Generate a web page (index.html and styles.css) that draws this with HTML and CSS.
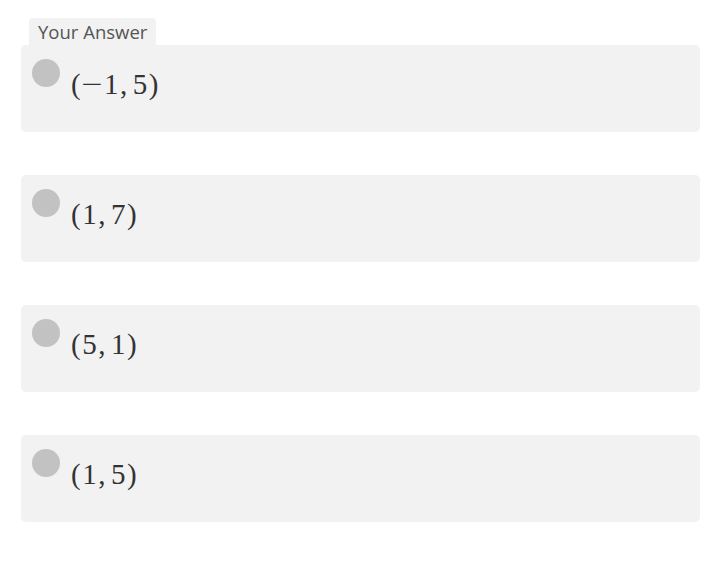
FILE: index.html
```html
<!DOCTYPE html>
<html>
<head>
<meta charset="utf-8">
<link rel="stylesheet" href="styles.css">
</head>
<body>
<div class="question">
  <div class="tab">Your Answer</div>
  <div class="options">
    <div class="option"><span class="radio"></span><span class="math">(<span class="minus">−</span>1,<span class="thin"></span>5)</span></div>
    <div class="option"><span class="radio"></span><span class="math">(1,<span class="thin"></span>7)</span></div>
    <div class="option"><span class="radio"></span><span class="math">(5,<span class="thin"></span>1)</span></div>
    <div class="option"><span class="radio"></span><span class="math">(1,<span class="thin"></span>5)</span></div>
  </div>
</div>
</body>
</html>
```

FILE: styles.css
```css
html, body {
  margin: 0;
  padding: 0;
  background: #ffffff;
}
.question {
  padding: 18px 13px 0 21px;
  width: 679px;
}
.tab {
  display: inline-block;
  margin-left: 8px;
  height: 27px;
  box-sizing: border-box;
  padding: 3px 9px 0 9px;
  background: #f2f2f2;
  border-radius: 4px 4px 0 0;
  font-family: "Open Sans", sans-serif;
  font-size: 18.5px;
  line-height: 22px;
  color: #555555;
}
.options {
  display: flex;
  flex-direction: column;
  gap: 43px;
}
.option {
  height: 87px;
  box-sizing: border-box;
  background: #f2f2f2;
  border-radius: 5px;
  display: flex;
  align-items: flex-start;
  padding: 14px 0 0 11px;
}
.radio {
  width: 28px;
  height: 28px;
  border-radius: 50%;
  background: #c2c2c2;
  flex: none;
}
.math {
  margin-left: 11px;
  margin-top: 8px;
  font-family: "Liberation Serif", "Times New Roman", serif;
  font-size: 29px;
  line-height: 34px;
  color: #333333;
  letter-spacing: 1.5px;
}
.minus {
  display: inline-block;
  transform: scaleX(1.3);
  margin: 0 2px;
}
.thin {
  display: inline-block;
  width: 4px;
}
```
